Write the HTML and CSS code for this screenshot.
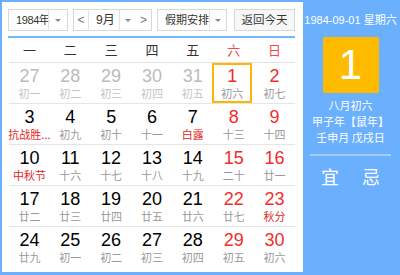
FILE: index.html
```html
<!DOCTYPE html>
<html lang="zh">
<head>
<meta charset="utf-8">
<link rel="stylesheet" href="styles.css">
</head>
<body>
<div class="cal">
  <div class="left">
    <div class="toolbar">
      <div class="sel year"><span class="txt">1984年</span><span class="arr"><i class="tri"></i></span></div>
      <div class="sel month"><span class="btn">&lt;</span><span class="txt">9月</span><span class="arr"><i class="tri"></i></span><span class="btn">&gt;</span></div>
      <div class="sel holiday"><span class="txt">假期安排</span><span class="arr"><i class="tri"></i></span></div>
      <div class="today">返回今天</div>
    </div>
    <div class="grid">
      <div class="week"><span>一</span><span>二</span><span>三</span><span>四</span><span>五</span><span class="we">六</span><span class="we">日</span></div>
      <div class="row">
        <div class="cell other"><b>27</b><em>初一</em></div>
        <div class="cell other"><b>28</b><em>初二</em></div>
        <div class="cell other"><b>29</b><em>初三</em></div>
        <div class="cell other"><b>30</b><em>初四</em></div>
        <div class="cell other"><b>31</b><em>初五</em></div>
        <div class="cell we sel-day"><b>1</b><em>初六</em></div>
        <div class="cell we"><b>2</b><em>初七</em></div>
      </div>
      <div class="row">
        <div class="cell"><b>3</b><em class="fest">抗战胜...</em></div>
        <div class="cell"><b>4</b><em>初九</em></div>
        <div class="cell"><b>5</b><em>初十</em></div>
        <div class="cell"><b>6</b><em>十一</em></div>
        <div class="cell"><b>7</b><em class="fest">白露</em></div>
        <div class="cell we"><b>8</b><em>十三</em></div>
        <div class="cell we"><b>9</b><em>十四</em></div>
      </div>
      <div class="row">
        <div class="cell"><b>10</b><em class="fest">中秋节</em></div>
        <div class="cell"><b>11</b><em>十六</em></div>
        <div class="cell"><b>12</b><em>十七</em></div>
        <div class="cell"><b>13</b><em>十八</em></div>
        <div class="cell"><b>14</b><em>十九</em></div>
        <div class="cell we"><b>15</b><em>二十</em></div>
        <div class="cell we"><b>16</b><em>廿一</em></div>
      </div>
      <div class="row">
        <div class="cell"><b>17</b><em>廿二</em></div>
        <div class="cell"><b>18</b><em>廿三</em></div>
        <div class="cell"><b>19</b><em>廿四</em></div>
        <div class="cell"><b>20</b><em>廿五</em></div>
        <div class="cell"><b>21</b><em>廿六</em></div>
        <div class="cell we"><b>22</b><em>廿七</em></div>
        <div class="cell we"><b>23</b><em class="fest">秋分</em></div>
      </div>
      <div class="row last">
        <div class="cell"><b>24</b><em>廿九</em></div>
        <div class="cell"><b>25</b><em>初一</em></div>
        <div class="cell"><b>26</b><em>初二</em></div>
        <div class="cell"><b>27</b><em>初三</em></div>
        <div class="cell"><b>28</b><em>初四</em></div>
        <div class="cell we"><b>29</b><em>初五</em></div>
        <div class="cell we"><b>30</b><em>初六</em></div>
      </div>
    </div>
  </div>
  <div class="right">
    <div class="r-date">1984-09-01 星期六</div>
    <div class="r-day">1</div>
    <div class="r-info">
      <div>八月初六</div>
      <div>甲子年【鼠年】</div>
      <div>壬申月 戊戌日</div>
    </div>
    <div class="r-line"></div>
    <div class="r-yj"><span>宜</span><span>忌</span></div>
  </div>
</div>
</body>
</html>
```

FILE: styles.css
```css
* { box-sizing: border-box; margin: 0; padding: 0; }
body {
  margin: 0;
  font-family: "Liberation Sans", Arial, "Noto Sans CJK SC", sans-serif;
  background: #fff;
}
.cal {
  width: 400px;
  height: 275px;
  border: 2px solid #6bb0fd;
  display: flex;
  background: #6bb0fd;
}
.left {
  width: 301px;
  flex: none;
  height: 270px;
  background: #fff;
  padding: 7px 0 0 6px;
}
.toolbar {
  display: flex;
  height: 22px;
  font-size: 12px;
  color: #333;
  white-space: nowrap;
}
.sel {
  display: flex;
  align-items: center;
  border: 1px solid #d7d7d7;
  background: #fff;
  height: 22px;
  flex: none;
}
.sel .txt { flex: 1; min-width: 0; line-height: 20px; }
.sel .arr {
  flex: none;
  width: 17px;
  height: 20px;
  border-left: 1px solid #e2e2e2;
  display: flex;
  align-items: center;
  justify-content: center;
}
.tri {
  width: 0; height: 0;
  border-left: 3px solid transparent;
  border-right: 3px solid transparent;
  border-top: 3px solid #888;
}
.year { width: 60px; }
.year .txt { padding-left: 7px; font-size: 11px; letter-spacing: -0.4px; }
.year .arr { width: 19px; }
.month { width: 79px; margin-left: 5px; }
.month .btn {
  flex: none;
  width: 15px;
  height: 20px;
  line-height: 20px;
  text-align: center;
  color: #777;
  font-size: 12px;
}
.month .btn:first-child { border-right: 1px solid #e2e2e2; }
.month .txt { padding-left: 7px; }
.holiday { width: 70px; margin-left: 5px; }
.holiday .txt { padding-left: 7px; font-size: 11px; }
.today {
  flex: none;
  width: 61px;
  margin-left: 7px;
  height: 22px;
  line-height: 20px;
  text-align: center;
  border: 1px solid #d7d7d7;
  background: #f7f7f7;
  font-size: 11.5px;
}
.grid {
  width: 287px;
  margin-top: 5px;
  border-top: 2px solid #74b5fb;
  padding-left: 1px;
}
.week {
  display: grid;
  grid-template-columns: repeat(7, 1fr);
  height: 25px;
  line-height: 24px;
  border-bottom: 1px solid #e3e3e3;
  font-size: 13px;
  color: #333;
  text-align: center;
  font-family: "Noto Sans CJK SC", sans-serif;
}
.week .we { color: #f24b4b; }
.row {
  display: grid;
  grid-template-columns: repeat(7, 1fr);
  height: 41px;
  border-bottom: 1px solid #e6e6e6;
}
.row.last { border-bottom: none; }
.cell {
  display: flex;
  flex-direction: column;
  align-items: center;
  padding-top: 4px;
  height: 40px;
  white-space: nowrap;
  min-width: 0;
}
.cell b {
  font-weight: normal;
  font-size: 18px;
  line-height: 19px;
  color: #000;
}
.cell em {
  font-style: normal;
  font-size: 11px;
  line-height: 14px;
  color: #999;
  font-family: "Noto Sans CJK SC", sans-serif;
}
.cell.we b { color: #f32c2c; }
.cell em.fest { color: #e52626; }
.cell.other b { color: #bbb; }
.cell.other em { color: #c4c4c4; }
.sel-day {
  border: 2px solid #ffb600;
  padding-top: 2px;
  margin-left: -1px;
  width: 40px;
}
.right {
  flex: 1;
  display: flex;
  flex-direction: column;
  align-items: center;
  color: #fff;
  font-family: "Noto Sans CJK SC", sans-serif;
  white-space: nowrap;
}
.r-date {
  margin-top: 10px;
  font-size: 11px;
  line-height: 16px;
  font-family: "Liberation Sans", "Noto Sans CJK SC", sans-serif;
}
.r-day {
  margin-top: 9px;
  width: 56px;
  height: 56px;
  background: #ffbb00;
  border-radius: 2px;
  font-family: "Liberation Sans", sans-serif;
  font-size: 42px;
  line-height: 56px;
  text-align: center;
}
.r-info {
  margin-top: 4px;
  font-size: 11px;
  line-height: 16px;
  text-align: center;
}
.r-line {
  margin-top: 9px;
  width: 81px;
  height: 2px;
  background: #a3cdfc;
}
.r-yj {
  margin-top: 9px;
  display: flex;
  gap: 23px;
  font-size: 18px;
  line-height: 22px;
}
```
